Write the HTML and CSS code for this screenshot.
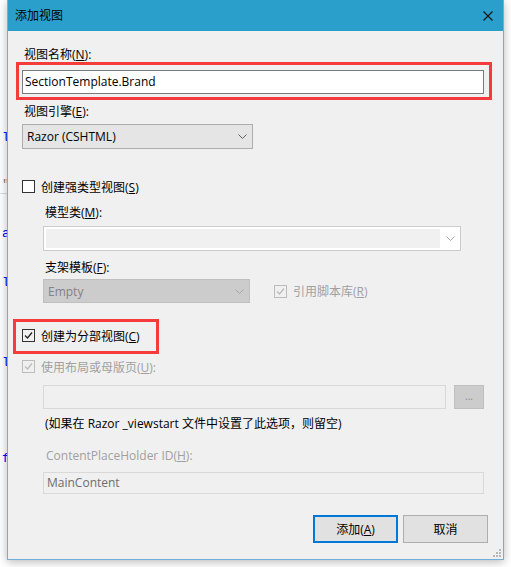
FILE: index.html
```html
<!DOCTYPE html>
<html lang="zh-CN">
<head>
    <meta charset="UTF-8">
    <meta name="viewport" content="width=device-width, initial-scale=1.0">
    <title>添加视图</title>
    <link rel="stylesheet" href="styles.css">
</head>
<body>
    <!-- editor behind the dialog -->
    <div class="editor">
        <span class="code c1">l</span>
        <span class="code gray c2">"</span>
        <span class="rule r1"></span>
        <span class="code c3">a</span>
        <span class="code c4">l</span>
        <span class="code c5">l</span>
        <span class="code c6">f</span>
    </div>

    <div class="dialog">
        <div class="titlebar">
            <span class="title">添加视图</span>
            <svg class="close" width="10" height="10" viewBox="0 0 10 10">
                <path d="M0.5 0.5 L9.5 9.5 M9.5 0.5 L0.5 9.5" stroke="#111" stroke-width="1.1" fill="none"/>
            </svg>
        </div>

        <div class="content">
            <div class="lbl name-lbl">视图名称(<u>N</u>):</div>
            <div class="textbox name-box">SectionTemplate.Brand</div>

            <div class="lbl engine-lbl">视图引擎(<u>E</u>):</div>
            <div class="select engine">
                <span>Razor (CSHTML)</span>
                <svg class="chev" width="9" height="5" viewBox="0 0 9 5"><path d="M0.5 0.5 L4.5 4.5 L8.5 0.5" stroke="#606060" fill="none"/></svg>
            </div>

            <div class="check strong">
                <span class="box"></span>
                <span>创建强类型视图(<u>S</u>)</span>
            </div>

            <div class="indent">
                <div class="lbl model-lbl">模型类(<u>M</u>):</div>
                <div class="combo">
                    <div class="combo-field"></div>
                    <svg class="chev" width="9" height="5" viewBox="0 0 9 5"><path d="M0.5 0.5 L4.5 4.5 L8.5 0.5" stroke="#a8a8a8" fill="none"/></svg>
                </div>

                <div class="lbl tpl-lbl">支架模板(<u>F</u>):</div>
                <div class="tpl-row">
                    <div class="select off tpl">
                        <span>Empty</span>
                        <svg class="chev" width="9" height="5" viewBox="0 0 9 5"><path d="M0.5 0.5 L4.5 4.5 L8.5 0.5" stroke="#a8a8a8" fill="none"/></svg>
                    </div>
                    <div class="check disabled scripts">
                        <span class="box">
                            <svg width="11" height="11" viewBox="0 0 11 11"><path d="M2 5.5 L4.5 8 L9 2.5" stroke="#bcbcbc" stroke-width="1.3" fill="none"/></svg>
                        </span>
                        <span>引用脚本库(<u>R</u>)</span>
                    </div>
                </div>
            </div>

            <div class="check partial">
                <span class="box">
                    <svg width="11" height="11" viewBox="0 0 11 11"><path d="M2 5.5 L4.5 8 L9 2.5" stroke="#222" stroke-width="1.3" fill="none"/></svg>
                </span>
                <span>创建为分部视图(<u>C</u>)</span>
            </div>

            <div class="check disabled layout">
                <span class="box">
                    <svg width="11" height="11" viewBox="0 0 11 11"><path d="M2 5.5 L4.5 8 L9 2.5" stroke="#bcbcbc" stroke-width="1.3" fill="none"/></svg>
                </span>
                <span>使用布局或母版页(<u>U</u>):</span>
            </div>

            <div class="indent">
                <div class="layout-row">
                    <div class="textbox off layout-box"></div>
                    <div class="browse">...</div>
                </div>
                <div class="note">(如果在 Razor _viewstart 文件中设置了此选项，则留空)</div>

                <div class="lbl gray cph-lbl">ContentPlaceHolder ID(<u>H</u>):</div>
                <div class="textbox off cph-box">MainContent</div>
            </div>

            <div class="buttons">
                <button class="btn default">添加(<u>A</u>)</button>
                <button class="btn">取消</button>
            </div>
        </div>

        <div class="mark mark-name"></div>
        <div class="mark mark-partial"></div>

        <svg class="grip" width="8" height="8" viewBox="0 0 8 8" fill="#b8b8b8">
            <rect x="6" y="0" width="2" height="2"/>
            <rect x="3" y="3" width="2" height="2"/>
            <rect x="6" y="3" width="2" height="2"/>
            <rect x="0" y="6" width="2" height="2"/>
            <rect x="3" y="6" width="2" height="2"/>
            <rect x="6" y="6" width="2" height="2"/>
        </svg>
    </div>
</body>
</html>
```

FILE: styles.css
```css
body {
    margin: 0;
    width: 511px;
    height: 567px;
    background: #ffffff;
    overflow: hidden;
    font-family: "Segoe UI", "Open Sans", "Noto Sans CJK SC", sans-serif;
    font-size: 12px;
    color: #000;
}

u {
    text-decoration: underline;
    text-underline-offset: 1px;
}

/* editor in the back */
.editor {
    position: relative;
    width: 511px;
    height: 567px;
    background: #ffffff;
}
.code {
    position: absolute;
    left: 2px;
    font-family: "Liberation Mono", monospace;
    font-size: 13px;
    line-height: 13px;
    color: #0000ff;
}
.code.gray { color: #808080; }
.c1 { top: 131px; }
.c2 { top: 178px; }
.c3 { top: 227px; }
.c4 { top: 276px; }
.c5 { top: 356px; }
.c6 { top: 452px; }
.rule {
    position: absolute;
    left: 0;
    width: 8px;
    height: 1px;
    background: #dcdcdc;
}
.r1 { top: 193px; }

/* dialog window */
.dialog {
    position: absolute;
    left: 7px;
    top: 0;
    width: 497px;
    height: 560px;
    box-sizing: border-box;
    border: 1px solid #6db0da;
    border-top: 0;
    background: #f0f0f0;
    box-shadow: 0 2px 9px rgba(0, 0, 0, 0.28);
}

.titlebar {
    height: 31px;
    background: #2b9fcb;
    display: flex;
    align-items: center;
    justify-content: space-between;
    padding: 0 10px 0 7px;
}
.title {
    font-size: 12px;
    line-height: 16px;
    padding-top: 1px;
}
.close {
    margin-top: 0;
}

.content {
    padding: 0 15px 0 14px;
}

.lbl {
    height: 16px;
    line-height: 16px;
    padding-left: 2px;
    white-space: nowrap;
}
.gray { color: #a0a0a0; }

.name-lbl { margin-top: 16px; }
.engine-lbl { margin-top: 10px; }
.model-lbl { margin-top: 10px; }
.tpl-lbl { margin-top: 9px; }
.cph-lbl { margin-top: 16px; padding-left: 3px; }

.textbox {
    box-sizing: border-box;
    border: 1px solid #7a7a7a;
    background: #ffffff;
    padding-left: 2px;
    line-height: 22px;
    white-space: nowrap;
}
.textbox.off {
    border-color: #d9d9d9;
    background: #f0f0f0;
    color: #6d6d6d;
}
.name-box {
    margin-top: 7px;
    width: 462px;
    height: 24px;
}

.select {
    box-sizing: border-box;
    height: 25px;
    border: 1px solid #adadad;
    background: #e5e5e5;
    display: flex;
    align-items: center;
    justify-content: space-between;
    padding: 0 5px 0 4px;
}
.select.off {
    background: #cccccc;
    border-color: #bfbfbf;
    color: #838383;
}
.engine {
    margin-top: 4px;
    width: 231px;
}

.check {
    display: flex;
    align-items: center;
    gap: 6px;
    height: 17px;
    white-space: nowrap;
}
.check .box {
    box-sizing: border-box;
    width: 13px;
    height: 13px;
    border: 1px solid #333333;
    background: #ffffff;
    display: flex;
    align-items: center;
    justify-content: center;
}
.check.disabled {
    color: #a0a0a0;
}
.check.disabled .box {
    border-color: #bcbcbc;
    background: #f0f0f0;
}
.partial .box { background: #f0f0f0; }

.strong { margin-top: 29px; }
.partial { margin-top: 24px; }
.layout { margin-top: 14px; }

.indent {
    padding-left: 21px;
}

.combo {
    box-sizing: border-box;
    margin-top: 5px;
    width: 418px;
    height: 25px;
    border: 1px solid #cccccc;
    background: #ffffff;
    display: flex;
    align-items: center;
    justify-content: space-between;
    padding: 2px 5px 2px 2px;
}
.combo-field {
    width: 394px;
    height: 19px;
    background: #f0f0f0;
}

.tpl-row {
    margin-top: 3px;
    display: flex;
    align-items: center;
    gap: 24px;
}
.tpl {
    width: 207px;
    height: 24px;
}

.layout-row {
    margin-top: 10px;
    display: flex;
    gap: 8px;
}
.layout-box {
    width: 403px;
    height: 24px;
}
.browse {
    box-sizing: border-box;
    width: 30px;
    height: 24px;
    background: #cccccc;
    border: 1px solid #bfbfbf;
    color: #8a8a8a;
    font-size: 10px;
    text-align: center;
    line-height: 20px;
}

.note {
    margin-top: 7px;
    height: 16px;
    line-height: 16px;
    padding-left: 2px;
    white-space: nowrap;
}

.cph-box {
    margin-top: 8px;
    width: 441px;
    height: 22px;
    line-height: 20px;
    padding-left: 3px;
}

.buttons {
    margin-top: 21px;
    display: flex;
    justify-content: flex-end;
    gap: 5px;
}
.btn {
    box-sizing: border-box;
    width: 85px;
    height: 28px;
    background: #e1e1e1;
    border: 1px solid #adadad;
    font-family: inherit;
    font-size: 12px;
    color: #000;
    padding: 0;
}
.btn.default {
    border: 2px solid #0078d7;
}

/* red annotation frames */
.mark {
    position: absolute;
    box-sizing: border-box;
    border: 3px solid #f53b3b;
}
.mark-name {
    left: 8px;
    top: 62px;
    width: 476px;
    height: 38px;
}
.mark-partial {
    left: 5px;
    top: 319px;
    width: 146px;
    height: 35px;
}

.grip {
    position: absolute;
    right: 2px;
    bottom: 2px;
}
```
